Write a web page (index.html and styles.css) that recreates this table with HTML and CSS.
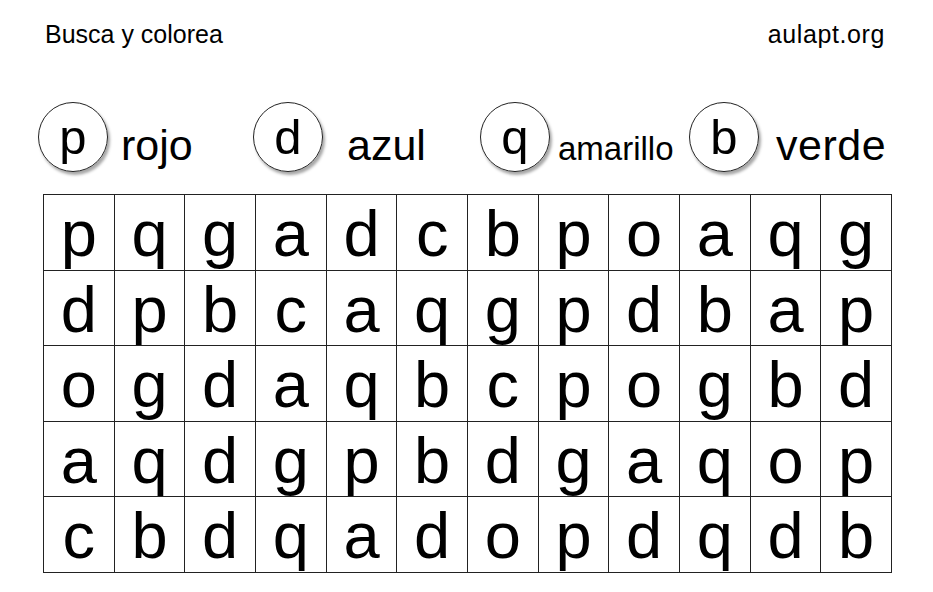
FILE: index.html
```html
<!DOCTYPE html>
<html lang="es">
<head>
<meta charset="utf-8">
<title>Busca y colorea</title>
<link rel="stylesheet" href="styles.css">
</head>
<body>
<header class="top">
  <span class="title">Busca y colorea</span>
  <span class="site">aulapt.org</span>
</header>
<section class="legend">
  <div class="item item-1"><span class="circle">p</span><span class="label">rojo</span></div>
  <div class="item item-2"><span class="circle">d</span><span class="label">azul</span></div>
  <div class="item item-3"><span class="circle">q</span><span class="label small">amarillo</span></div>
  <div class="item item-4"><span class="circle">b</span><span class="label">verde</span></div>
</section>
<section class="grid">
  <div class="cell">p</div><div class="cell">q</div><div class="cell">g</div><div class="cell">a</div><div class="cell">d</div><div class="cell">c</div><div class="cell">b</div><div class="cell">p</div><div class="cell">o</div><div class="cell">a</div><div class="cell">q</div><div class="cell">g</div>
  <div class="cell">d</div><div class="cell">p</div><div class="cell">b</div><div class="cell">c</div><div class="cell">a</div><div class="cell">q</div><div class="cell">g</div><div class="cell">p</div><div class="cell">d</div><div class="cell">b</div><div class="cell">a</div><div class="cell">p</div>
  <div class="cell">o</div><div class="cell">g</div><div class="cell">d</div><div class="cell">a</div><div class="cell">q</div><div class="cell">b</div><div class="cell">c</div><div class="cell">p</div><div class="cell">o</div><div class="cell">g</div><div class="cell">b</div><div class="cell">d</div>
  <div class="cell">a</div><div class="cell">q</div><div class="cell">d</div><div class="cell">g</div><div class="cell">p</div><div class="cell">b</div><div class="cell">d</div><div class="cell">g</div><div class="cell">a</div><div class="cell">q</div><div class="cell">o</div><div class="cell">p</div>
  <div class="cell">c</div><div class="cell">b</div><div class="cell">d</div><div class="cell">q</div><div class="cell">a</div><div class="cell">d</div><div class="cell">o</div><div class="cell">p</div><div class="cell">d</div><div class="cell">q</div><div class="cell">d</div><div class="cell">b</div>
</section>
</body>
</html>
```

FILE: styles.css
```css
* { box-sizing: border-box; }

body {
  margin: 0;
  padding: 20px 0 0 0;
  background: #fff;
  color: #000;
  font-family: "Liberation Sans", Arial, sans-serif;
  width: 933px;
}

.top {
  display: flex;
  justify-content: space-between;
  padding: 0 48px 0 45px;
  font-size: 25px;
  line-height: 28px;
  height: 28px;
}

.site {
  letter-spacing: 0.6px;
}

.legend {
  display: flex;
  align-items: flex-end;
  margin-top: 54px;
  padding-left: 38px;
  height: 70px;
}

.item {
  display: flex;
  align-items: flex-end;
  flex: none;
}

.item-1 { width: 215px; }
.item-2 { width: 227px; }
.item-3 { width: 209px; }

.circle {
  flex: none;
  width: 70px;
  height: 70px;
  border: 1px solid #222;
  border-radius: 50%;
  display: flex;
  align-items: center;
  justify-content: center;
  font-size: 49px;
  line-height: 68px;
  box-shadow: 2px 3px 3px rgba(0, 0, 0, 0.35);
}

.label {
  font-size: 43px;
  line-height: 42px;
  margin-bottom: 6px;
}

.label.small {
  font-size: 33px;
  line-height: 33px;
  margin-bottom: 7px;
}

.item-1 .label { margin-left: 13px; }
.item-2 .label { margin-left: 24px; }
.item-3 .label { margin-left: 8px; }
.item-4 .label { margin-left: 17px; letter-spacing: 0.5px; }

.grid {
  margin: 22px 0 0 43px;
  width: 849px;
  display: grid;
  grid-template-columns: repeat(12, 1fr);
  grid-auto-rows: 75.6px;
  border-top: 1px solid #222;
  border-left: 1px solid #222;
}

.cell {
  border-right: 1px solid #222;
  border-bottom: 1px solid #222;
  text-align: center;
  font-size: 65px;
  line-height: 74px;
  padding-top: 2px;
}
```
